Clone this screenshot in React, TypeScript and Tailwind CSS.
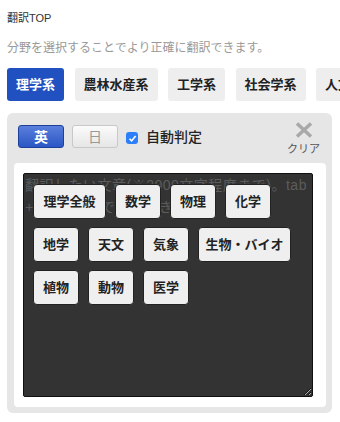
import React, { useState } from 'react';

const TABS = ['理学系', '農林水産系', '工学系', '社会学系', '人文学系'];

const FIELD_ROWS: { label: string; width: string }[][] = [
  [
    { label: '理学全般', width: 'w-[73px]' },
    { label: '数学', width: 'w-[46px]' },
    { label: '物理', width: 'w-[46px]' },
    { label: '化学', width: 'w-[46px]' },
  ],
  [
    { label: '地学', width: 'w-[46px]' },
    { label: '天文', width: 'w-[46px]' },
    { label: '気象', width: 'w-[46px]' },
    { label: '生物・バイオ', width: 'w-[93px]' },
  ],
  [
    { label: '植物', width: 'w-[46px]' },
    { label: '動物', width: 'w-[46px]' },
    { label: '医学', width: 'w-[46px]' },
  ],
];

const CloseIcon = () => (
  <svg width="18" height="16" viewBox="0 0 18 16" className="block">
    <path d="M2 1.5 L16 14.5 M16 1.5 L2 14.5" stroke="#a8a8a8" strokeWidth="3.4" strokeLinecap="butt" />
  </svg>
);

export default function App() {
  const [activeTab, setActiveTab] = useState(0);
  const [lang, setLang] = useState<'en' | 'ja'>('en');
  const [auto, setAuto] = useState(true);
  const [text, setText] = useState('');

  return (
    <div className="w-[340px] h-[422px] overflow-hidden bg-white font-['Liberation_Sans','Noto_Sans_CJK_JP',sans-serif] text-[#333]">
      <div className="pl-[7px] pt-[11px]">
        <p className="text-[11px] leading-[14px] text-[#333]">翻訳TOP</p>
        <p className="mt-[15px] text-[12px] leading-[17px] text-[#999]">分野を選択することでより正確に翻訳できます。</p>

        {/* field tabs */}
        <div className="mt-[11px] flex gap-[10.5px] whitespace-nowrap overflow-hidden">
          {TABS.map((t, i) => (
            <button
              key={t}
              onClick={() => setActiveTab(i)}
              className={`shrink-0 h-[33px] px-[9px] rounded-[3px] text-[13px] font-bold ${
                activeTab === i ? 'bg-[#2150c0] text-white' : 'bg-[#eeeeee] text-[#222]'
              }`}
            >
              {t}
            </button>
          ))}
        </div>

        {/* translate panel */}
        <div className="mt-[12px] w-[325px] rounded-[6px] bg-[#e6e6e6] pl-[7px] pr-[6px] pb-[6px]">
          <div className="flex items-start pl-[4px] pr-[6px] pt-[9px] h-[50px]">
            <div className="flex items-center gap-[8px] pt-[3px]">
              <button
                onClick={() => setLang('en')}
                className={`w-[46px] h-[23px] rounded-[3px] border text-[14px] font-bold leading-none ${
                  lang === 'en'
                    ? 'border-[#1e3f9a] bg-gradient-to-b from-[#5a7fdc] to-[#2b56c4] text-white'
                    : 'border-[#c8c8c8] bg-gradient-to-b from-[#fbfbfb] to-[#e6e6e6] text-[#999]'
                }`}
              >
                英
              </button>
              <button
                onClick={() => setLang('ja')}
                className={`w-[46px] h-[23px] rounded-[3px] border text-[14px] leading-none ${
                  lang === 'ja'
                    ? 'border-[#1e3f9a] bg-gradient-to-b from-[#5a7fdc] to-[#2b56c4] text-white font-bold'
                    : 'border-[#c8c8c8] bg-gradient-to-b from-[#fbfbfb] to-[#e6e6e6] text-[#999]'
                }`}
              >
                日
              </button>
              <label className="flex items-center gap-[8px] cursor-pointer" onClick={() => setAuto(!auto)}>
                <span
                  className={`mt-[3px] w-[12px] h-[12px] rounded-[3px] flex items-center justify-center ${
                    auto ? 'bg-[#2d7ff9]' : 'bg-white border border-[#aaa]'
                  }`}
                >
                  {auto && (
                    <svg width="9" height="9" viewBox="0 0 9 9">
                      <path d="M1.5 4.8 L3.6 6.9 L7.6 2" stroke="white" strokeWidth="1.6" fill="none" />
                    </svg>
                  )}
                </span>
                <span className="text-[14px] font-medium text-[#222] leading-[20px]">自動判定</span>
              </label>
            </div>
            <button onClick={() => setText('')} className="ml-auto flex flex-col items-center">
              <CloseIcon />
              <span className="mt-[5px] text-[11px] leading-[13px] text-[#555]">クリア</span>
            </button>
          </div>

          <div className="rounded-[4px] bg-white pl-[9px] pr-[13px] pt-[10px] pb-[10px]">
            <div className="relative h-[224px]">
              <textarea
                value={text}
                onChange={e => setText(e.target.value)}
                placeholder="翻訳したい文章(※2000文字程度まで)。tab + enterキーで翻訳できます。"
                className="block w-full h-full rounded-[2px] border border-[#111] bg-[#333] px-[1px] pt-0 text-[14px] leading-[22px] tracking-[0.5px] text-white placeholder:text-[#5c5c5c] outline-none"
              />
              {text === '' && (
                <div className="absolute left-[10px] top-[11px] flex flex-col gap-[8px]">
                  {FIELD_ROWS.map((row, r) => (
                    <div key={r} className="flex gap-[9px]">
                      {row.map(f => (
                        <button
                          key={f.label}
                          onClick={() => setText(f.label)}
                          className={`${f.width} h-[35px] rounded-[4px] border border-[#222] bg-[#efefef] text-[13px] font-bold text-[#222] whitespace-nowrap`}
                        >
                          {f.label}
                        </button>
                      ))}
                    </div>
                  ))}
                </div>
              )}
            </div>
          </div>
        </div>
      </div>
    </div>
  );
}
